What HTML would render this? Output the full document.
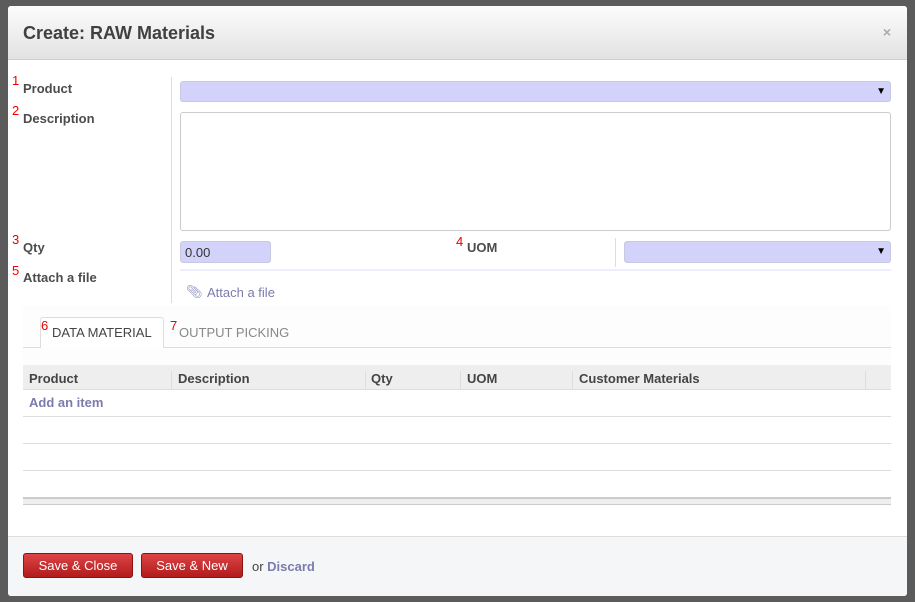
<!DOCTYPE html>
<html><head><style>
*{margin:0;padding:0;box-sizing:border-box}
body{width:915px;height:602px;background:#5b5b5b;font-family:"Liberation Sans",Arial,sans-serif;font-size:13px;color:#4c4c4c;position:relative;overflow:hidden}
.a{position:absolute}
.m{left:8px;top:6px;width:899px;height:590px;background:#fff;border-radius:3px;overflow:hidden}
.hd{left:0;top:0;width:899px;height:54px;background:linear-gradient(#fcfcfc,#e2e2e2);border-bottom:1px solid #cfcfcf}
.hd h1{position:absolute;left:15px;top:17px;font-size:18px;font-weight:bold;color:#404040}
.lbl{font-weight:bold;color:#4c4c4c;font-size:13px}
.n{color:#e00;font-size:13px;font-weight:normal}
.inp{background:#d2d2fb;border:1px solid #c8c8e0;border-radius:3px}
.arr{position:absolute;right:4px;top:4px;font-size:10px;color:#000}
.th{background:#eee;border-bottom:1px solid #ddd;height:25px;font-weight:bold;color:#444}
.th span{position:absolute;top:6px}
.sep{position:absolute;top:0;height:25px;border-left:1px solid #ddd}
.btn{background:linear-gradient(#dc4445,#b21b1c);border:1px solid #8a1414;border-radius:3px;color:#fff;font-size:13px;text-align:center;line-height:23px;height:25px}
</style></head><body>
<div class="a m">
 <div class="a hd"><h1>Create: RAW Materials</h1><span class="a" style="right:16px;top:18px;color:#aaa;font-size:14px;font-weight:bold">×</span></div>
 <div class="a" style="left:163px;top:71px;height:226px;border-left:1px solid #ddd"></div>
 <span class="a n" style="left:4px;top:67px">1</span><span class="a lbl" style="left:15px;top:75px">Product</span>
 <span class="a n" style="left:4px;top:97px">2</span><span class="a lbl" style="left:15px;top:105px">Description</span>
 <span class="a n" style="left:4px;top:226px">3</span><span class="a lbl" style="left:15px;top:234px">Qty</span>
 <span class="a n" style="left:4px;top:257px">5</span><span class="a lbl" style="left:15px;top:264px">Attach a file</span>
 <div class="a inp" style="left:172px;top:75px;width:711px;height:21px"><span class="arr">▼</span></div>
 <div class="a" style="left:172px;top:106px;width:711px;height:119px;border:1px solid #ccc;border-radius:3px"></div>
 <div class="a inp" style="left:172px;top:235px;width:91px;height:22px;padding:3px 4px;color:#333">0.00</div>
 <span class="a n" style="left:448px;top:228px">4</span><span class="a lbl" style="left:459px;top:234px">UOM</span>
 <div class="a" style="left:607px;top:232px;height:29px;border-left:1px solid #ddd"></div>
 <div class="a inp" style="left:616px;top:235px;width:267px;height:22px"><span class="arr">▼</span></div>
 <div class="a" style="left:172px;top:263px;width:711px;border-top:2px solid #eef"></div>
 <span class="a" style="left:178px;top:278px;color:#8a89ba;font-size:13px">📎︎</span>
 <span class="a" style="left:199px;top:279px;color:#7c7bad">Attach a file</span>
 <div class="a" style="left:15px;top:300px;width:868px;height:200px;background:#fdfdfd"></div>
 <div class="a" style="left:15px;top:341px;width:868px;border-top:1px solid #ddd"></div>
 <div class="a" style="left:32px;top:311px;width:124px;height:31px;background:#fff;border:1px solid #ddd;border-bottom:none;border-radius:3px 3px 0 0"></div>
 <span class="a n" style="left:33px;top:312px">6</span><span class="a" style="left:44px;top:319px;color:#444">DATA MATERIAL</span>
 <span class="a n" style="left:162px;top:312px">7</span><span class="a" style="left:171px;top:319px;color:#888">OUTPUT PICKING</span>
 <div class="a th" style="left:15px;top:359px;width:868px">
  <span style="left:6px">Product</span><span class="sep" style="left:148px"></span>
  <span style="left:155px">Description</span><span class="sep" style="left:342px"></span>
  <span style="left:348px">Qty</span><span class="sep" style="left:437px"></span>
  <span style="left:444px">UOM</span><span class="sep" style="left:549px"></span>
  <span style="left:556px">Customer Materials</span><span class="sep" style="left:842px"></span>
 </div>
 <div class="a" style="left:15px;top:384px;width:868px;height:107px;background:#fff"></div>
 <span class="a" style="left:21px;top:389px;color:#7c7bad;font-weight:bold">Add an item</span>
 <div class="a" style="left:15px;top:410px;width:868px;border-top:1px solid #ddd"></div>
 <div class="a" style="left:15px;top:437px;width:868px;border-top:1px solid #ddd"></div>
 <div class="a" style="left:15px;top:464px;width:868px;border-top:1px solid #ddd"></div>
 <div class="a" style="left:15px;top:491px;width:868px;height:8px;background:#eee;border-top:2px solid #ccc;border-bottom:1px solid #ccc"></div>
 <div class="a" style="left:0;top:530px;width:899px;height:60px;background:#f5f6f8;border-top:1px solid #ddd"></div>
 <div class="a btn" style="left:15px;top:547px;width:110px">Save &amp; Close</div>
 <div class="a btn" style="left:133px;top:547px;width:102px">Save &amp; New</div>
 <span class="a" style="left:244px;top:553px;color:#444">or <b style="color:#7c7bad">Discard</b></span>
</div>
</body></html>
